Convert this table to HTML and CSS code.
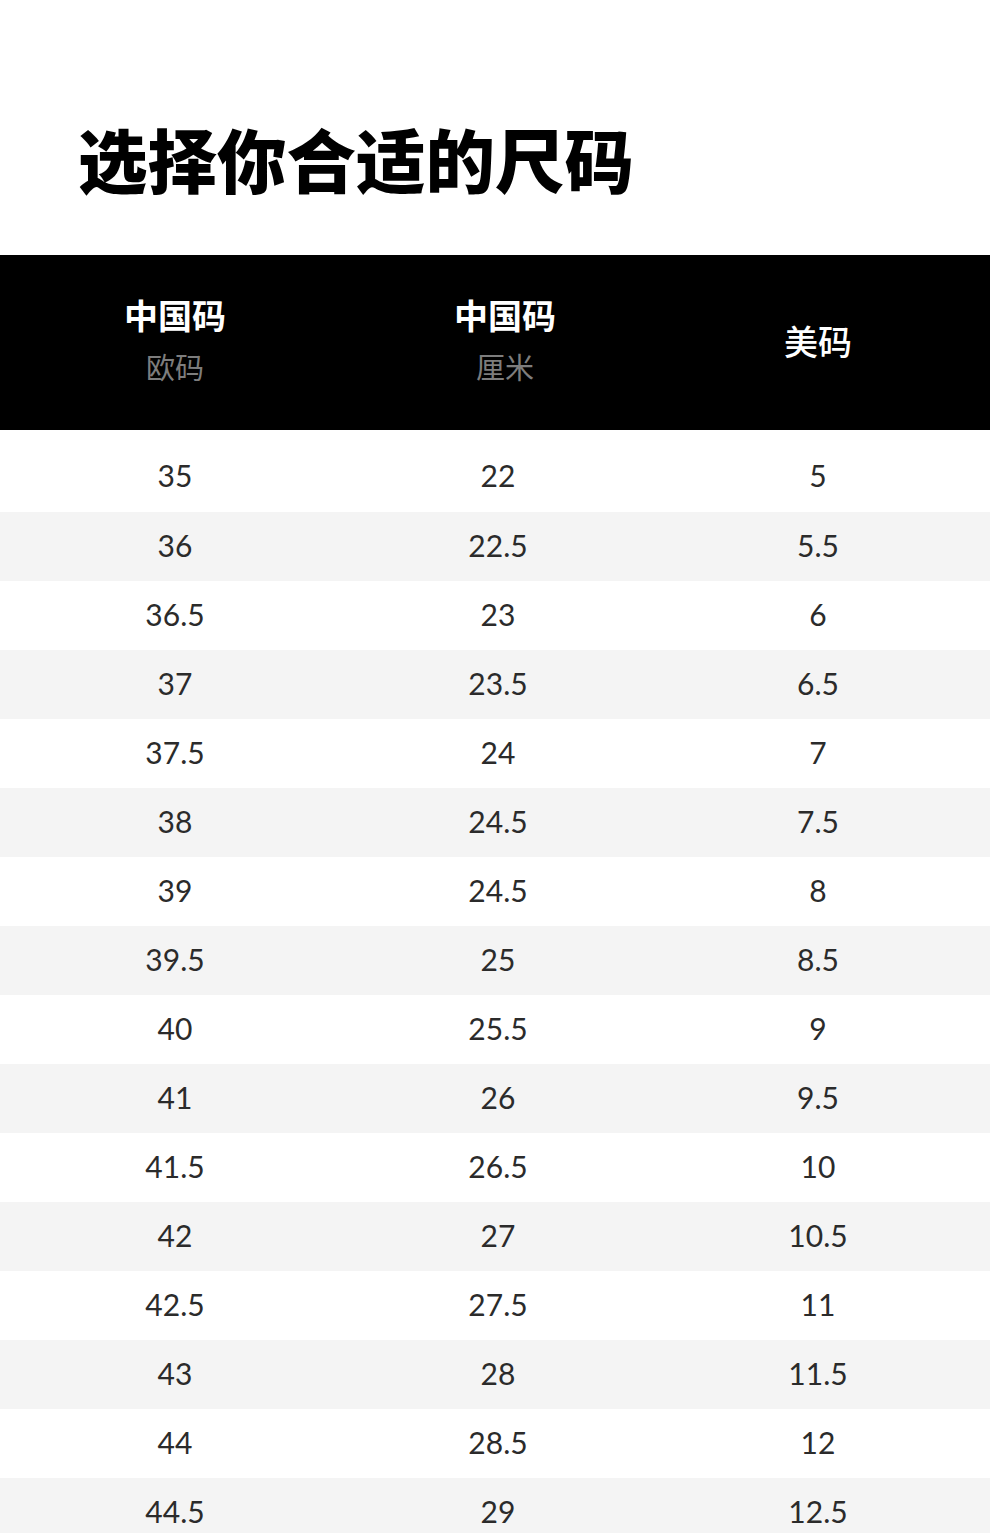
FILE: index.html
```html
<!DOCTYPE html>
<html lang="zh-CN">
<head>
<meta charset="utf-8">
<title>选择你合适的尺码</title>
<link rel="stylesheet" href="styles.css">
</head>
<body>
<div class="page">
  <h1 class="title">选择你合适的尺码</h1>
  <div class="size-table">
    <div class="thead">
      <div class="th"><span class="th-main">中国码</span><span class="th-sub">欧码</span></div>
      <div class="th th-shift"><span class="th-main">中国码</span><span class="th-sub">厘米</span></div>
      <div class="th"><span class="th-single">美码</span></div>
    </div>
    <div class="tbody">
      <div class="row first"><span>35</span><span>22</span><span>5</span></div>
      <div class="row alt"><span>36</span><span>22.5</span><span>5.5</span></div>
      <div class="row"><span>36.5</span><span>23</span><span>6</span></div>
      <div class="row alt"><span>37</span><span>23.5</span><span>6.5</span></div>
      <div class="row"><span>37.5</span><span>24</span><span>7</span></div>
      <div class="row alt"><span>38</span><span>24.5</span><span>7.5</span></div>
      <div class="row"><span>39</span><span>24.5</span><span>8</span></div>
      <div class="row alt"><span>39.5</span><span>25</span><span>8.5</span></div>
      <div class="row"><span>40</span><span>25.5</span><span>9</span></div>
      <div class="row alt"><span>41</span><span>26</span><span>9.5</span></div>
      <div class="row"><span>41.5</span><span>26.5</span><span>10</span></div>
      <div class="row alt"><span>42</span><span>27</span><span>10.5</span></div>
      <div class="row"><span>42.5</span><span>27.5</span><span>11</span></div>
      <div class="row alt"><span>43</span><span>28</span><span>11.5</span></div>
      <div class="row"><span>44</span><span>28.5</span><span>12</span></div>
      <div class="row alt"><span>44.5</span><span>29</span><span>12.5</span></div>
    </div>
  </div>
</div>
</body>
</html>
```
FILE: styles.css
```css
html, body {
  margin: 0;
  padding: 0;
  background: #ffffff;
}
body {
  font-family: "Noto Sans CJK SC", "Noto Sans", sans-serif;
  overflow: hidden;
}
.page {
  width: 990px;
  height: 1533px;
  overflow: hidden;
}
.title {
  margin: 0;
  padding: 123px 0 0 78px;
  height: 255px;
  box-sizing: border-box;
  font-size: 69.5px;
  line-height: 69px;
  font-weight: 900;
  color: #000;
  letter-spacing: 0;
}
.thead {
  display: grid;
  grid-template-columns: 350px 296px 344px;
  height: 175px;
  background: #000;
}
.th {
  display: flex;
  flex-direction: column;
  align-items: center;
  justify-content: center;
}
.th-shift {
  padding-left: 14px;
}
.th-main {
  color: #fff;
  font-size: 34px;
  font-weight: 700;
  line-height: 42px;
  margin-top: -5px;
}
.th-sub {
  color: #7d7d7d;
  font-size: 29px;
  font-weight: 400;
  line-height: 40px;
  margin-top: 10px;
}
.th-single {
  color: #fff;
  font-size: 34px;
  font-weight: 500;
  line-height: 42px;
  margin-top: -3px;
}
.row {
  display: grid;
  grid-template-columns: 350px 296px 344px;
  height: 69px;
  box-sizing: border-box;
  align-items: center;
  justify-items: center;
  font-family: "Lato", "Open Sans", sans-serif;
  font-size: 30px;
  color: #2b2b2b;
  background: #fff;
}
.row.first {
  padding-top: 12px;
  height: 82px;
}
.row.alt {
  background: #f4f4f4;
}
.row span {
  line-height: 1;
  padding-bottom: 4px;
}
```
